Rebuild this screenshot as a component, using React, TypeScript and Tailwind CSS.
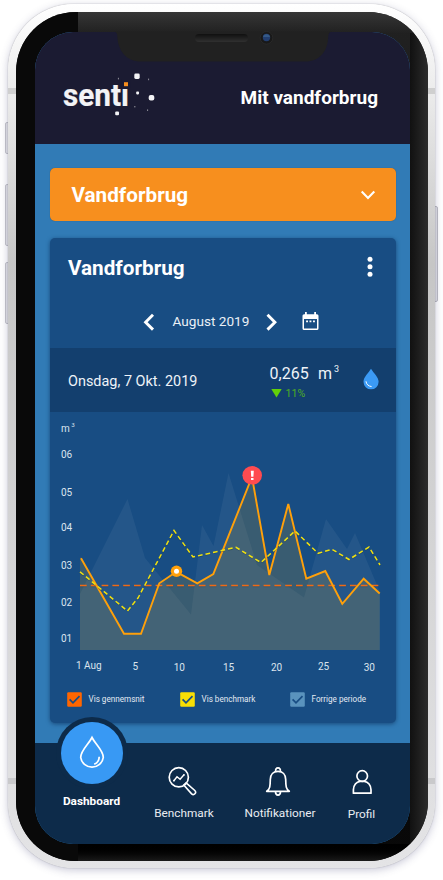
import React from "react";

const PREVIOUS =
  "80,594 127.5,499 145,558 191,614.5 202,525 213.5,546 228.5,473 257,565 304,597.5 326,519 347,549 355,533 377,585 380,593 380,650 80,650";
const CURRENT =
  "81,558.3 124,633.8 141,633.8 159.3,583.3 176.3,571.8 197.3,583.3 213.3,574 252,477 269.3,575 288.3,504 306.3,578.7 325.3,571 342.3,603.8 363.7,578.7 379.7,593.5";
const BENCHMARK =
  "80,571.8 127.5,611 138,598 174,530.5 193,557 236,547.3 261,562.5 295,531 318,553.3 332,549.3 349,559.5 369,547 380,565";

const Y_LABELS: [string, number][] = [
  ["06", 457.7],
  ["05", 495.7],
  ["04", 530.9],
  ["03", 568.7],
  ["02", 605.7],
  ["01", 642.3],
];
const X_LABELS: [string, number, number][] = [
  ["1 Aug", 88.8, 669],
  ["5", 135.2, 670],
  ["10", 179.3, 671.3],
  ["15", 228.5, 671.3],
  ["20", 276.5, 671.3],
  ["25", 323.5, 670],
  ["30", 369.3, 671.3],
];

function Logo() {
  return (
    <svg width="100" height="48" viewBox="62 70 100 48" className="block">
      <text x="63" y="106" fontSize="31.5" fontWeight="700" textLength="66" lengthAdjust="spacingAndGlyphs" fill="#f3f3f5" stroke="#f3f3f5" strokeWidth="0.2" fontFamily="Roboto, sans-serif">
        senti
      </text>
      <rect x="121.2" y="79" width="9" height="9" fill="#1b1b32" />
      <rect x="124" y="82.2" width="4" height="4" fill="#f78f1e" />
      <g fill="#f3f3f5">
        <rect x="134.3" y="73.5" width="5.4" height="5.4" rx="1.4" />
        <rect x="148.7" y="95" width="5.6" height="5.6" rx="2" />
        <rect x="136.2" y="91.6" width="2.8" height="2.8" rx="0.8" />
        <rect x="115.2" y="111.5" width="3.8" height="3.8" rx="1" />
      </g>
      <g fill="#85858f">
        <rect x="117.9" y="77.8" width="1.1" height="1.6" />
        <rect x="148" y="78.6" width="1.1" height="1.6" />
        <rect x="134.2" y="106" width="1.2" height="1.4" />
        <rect x="147" y="109.4" width="1.1" height="1.6" />
      </g>
    </svg>
  );
}

function Chart() {
  return (
    <svg width="346" height="270" viewBox="50 412 346 270" className="block" fontFamily="Roboto, sans-serif">
      <polygon points={PREVIOUS} fill="#fff" fillOpacity="0.055" />
      <polygon points={`80,557 ${CURRENT} 379.7,650 80,650`} fill="#d0a020" fillOpacity="0.18" />
      <g fill="none">
        <path d="M80 586.7H380" stroke="#0b2b4c" strokeOpacity=".2" strokeWidth="1" strokeDasharray="6.7 4.1" />
        <path d="M80 585.5H380" stroke="#f06a14" strokeWidth="1.5" strokeDasharray="6.7 4.1" />
        <polyline points={CURRENT} stroke="#ffa00a" strokeWidth="1.9" />
        <polyline points={BENCHMARK} stroke="#0b2b4c" strokeOpacity=".3" strokeWidth="1.6" strokeDasharray="4.7 3" transform="translate(0 .8)" />
        <polyline points={BENCHMARK} stroke="#f0e010" strokeWidth="1.5" strokeDasharray="4.7 3" />
      </g>
      <circle cx="176.5" cy="571.3" r="5.7" fill="#ffa00a" />
      <circle cx="176.5" cy="571.3" r="2.5" fill="#fff" />
      <ellipse cx="252.2" cy="475.3" rx="9.8" ry="9.3" fill="#ff4b50" />
      <path d="M250.8 470.7h3l-.4 6h-2.2zM251 478h2.5v2.1h-2.5z" fill="#fff" />
      <g fill="#dbe4ee" fontSize="10">
        <text x="61" y="432.3">m</text>
        <text x="71.2" y="427.3" fontSize="6.2">3</text>
        {Y_LABELS.map(([t, y]) => (
          <text key={t} x="61" y={y}>{t}</text>
        ))}
        {X_LABELS.map(([t, x, y]) => (
          <text key={t} x={x} y={y} textAnchor="middle">{t}</text>
        ))}
      </g>
    </svg>
  );
}

function Check({ color, label, className }: { color: string; label: string; className: string }) {
  return (
    <div className={`flex items-center ${className}`}>
      <svg width="15" height="15" viewBox="0 0 15 15" className="shrink-0">
        <rect x="0.2" y="0.2" width="14.6" height="14.6" rx="1.2" fill={color} />
        <path d="M2.6 7.4L6 10.8L12.5 4.2" fill="none" stroke="#184d83" strokeWidth="1.7" />
      </svg>
      <span className="ml-[6.5px] whitespace-nowrap text-[8.15px] text-[#e3eaf2]">{label}</span>
    </div>
  );
}

function MonthPicker() {
  return (
    <div className="flex h-[50px] items-start pl-[93px] pt-[13px]">
      <svg width="12" height="20" viewBox="0 0 12 20" className="mt-[1px]">
        <path d="M10 2.8L2.6 10.2L10 17.6" fill="none" stroke="#fff" strokeWidth="2.9" />
      </svg>
      <span className="ml-[17.5px] w-[78px] whitespace-nowrap text-[13.6px] leading-5 text-[#eaf0f6]">August 2019</span>
      <svg width="12" height="20" viewBox="0 0 12 20" className="ml-[15px] mt-[1px]">
        <path d="M1.5 2.8L8.9 10.2L1.5 17.6" fill="none" stroke="#fff" strokeWidth="2.9" />
      </svg>
      <svg width="18" height="20" viewBox="0 0 18 20" className="ml-[24px]">
        <path d="M2.1 3.2h12.8a1.6 1.6 0 0 1 1.6 1.6V17.4a1.6 1.6 0 0 1-1.6 1.6H2.1A1.6 1.6 0 0 1 .5 17.4V4.8A1.6 1.6 0 0 1 2.1 3.2zM2 8V17.5H15V8z" fill="#fff" fillRule="evenodd" />
        <path d="M3 1h1.8v3H3zM12.2 1H14v3h-1.8zM4.1 9.5h1.9v1.7H4.1zM7.5 9.5h1.9v1.7H7.5zM11 9.5h1.9v1.7H11z" fill="#fff" />
      </svg>
    </div>
  );
}

function UsageCard() {
  return (
    <section className="mt-[17px] h-[485.5px] w-[346px] rounded-[5px] bg-[#184d83] shadow-[0_1px_4px_rgba(10,40,80,0.6)]">
      <div className="flex h-[60px] items-center justify-between pl-[18px] pr-[23.5px]">
        <h2 className="mt-[2px] text-[20.7px] font-bold text-white">Vandforbrug</h2>
        <svg width="6" height="22" viewBox="0 0 6 22" fill="#fff" className="-mt-[2px]">
          <circle cx="3" cy="3.3" r="2.5" />
          <circle cx="3" cy="10.8" r="2.5" />
          <circle cx="3" cy="18.3" r="2.5" />
        </svg>
      </div>
      <MonthPicker />
      <div className="flex h-[64px] bg-[#133f6e] pl-[18px] text-[#eef3f8]">
        <span className="mt-[24px] w-[201.5px] whitespace-nowrap text-[14.45px] leading-5">Onsdag, 7 Okt. 2019</span>
        <div className="w-[93.5px] pt-[16px]">
          <div className="flex h-5 items-start whitespace-nowrap text-[16px] leading-5">
            <span className="w-[48.5px]">0,265</span>
            <span>m</span>
            <span className="-mt-[2px] ml-[2px] text-[9px] leading-[14px]">3</span>
          </div>
          <div className="flex items-center pl-[1.5px] text-[10.6px] leading-5 text-[#4fae26]">
            <svg width="12" height="9" viewBox="0 0 12 9" className="mr-[2.5px]">
              <path d="M.3 0H10.7L5.5 8.5z" fill="#62d008" />
            </svg>
            11%
          </div>
        </div>
        <svg width="16" height="22" viewBox="0 0 16 22" className="mt-[20px]">
          <path d="M8 .8C10.5 5 15.6 9.2 15.6 13.8A7.5 7.5 0 0 1 .5 13.8C.5 9.2 5.5 5 8 .8z" fill="#3b9af5" />
          <path d="M3 13.3C3.3 16.2 5.3 18.2 8.6 18.6" fill="none" stroke="#fff" strokeWidth="1" />
        </svg>
      </div>
      <Chart />
      <div className="flex pl-[17px] pt-[10px]">
        <Check color="#ff6600" label="Vis gennemsnit" className="w-[113px]" />
        <Check color="#f7df05" label="Vis benchmark" className="w-[110px]" />
        <Check color="#5a93bd" label="Forrige periode" className="w-[90px]" />
      </div>
    </section>
  );
}

function BottomNav() {
  const line = { fill: "none", stroke: "#fff", strokeWidth: 1.7 };
  return (
    <nav className="relative flex h-[101px] bg-[#0d2b4a] text-[11.8px] leading-4 text-[#e9edf2]">
      <div className="relative -mt-[26px] flex w-[113px] flex-col items-center">
        <div className="flex h-[72px] w-[72px] items-center justify-center rounded-full bg-[#0d2b4a]">
          <div className="flex h-[62px] w-[62px] items-center justify-center rounded-full bg-[#3899f4]">
            <svg width="28" height="36" viewBox="0 0 28 36">
              <path d="M14 2.5C17.5 9.6 25.3 15.3 25.3 22.5A11.4 11 0 0 1 2.7 22.5C2.7 15.3 10.5 9.6 14 2.5z" {...line} />
              <path d="M21.2 21.8C21.1 25.6 19.3 28 16.2 29.3" {...line} />
            </svg>
          </div>
        </div>
        <span className="mt-[4px] text-[11.8px] font-bold text-white">Dashboard</span>
      </div>
      <div className="flex w-[72px] flex-col items-center pt-[23px]">
        <svg width="30" height="30" viewBox="168 766 30 30" className="-ml-[2px]">
          <circle cx="178.8" cy="777.3" r="9.6" {...line} />
          <path d="M173.9 780.7L177 776.7L180.1 779.2L184 774.8" {...line} strokeWidth="1.4" />
          <path d="M186.1 782.8L194.8 790.5C197 792.7 194 795.9 191.6 793.9L183.8 785z" {...line} strokeWidth="1.6" />
          <circle cx="173.9" cy="780.7" r=".9" fill="#fff" />
          <circle cx="184" cy="774.8" r=".9" fill="#fff" />
        </svg>
        <span className="mt-[9px]">Benchmark</span>
      </div>
      <div className="flex w-[120px] flex-col items-center pt-[22.5px]">
        <svg width="26" height="30" viewBox="265 765 26 30" className="-ml-[4px]">
          <path d="M266.7 790.3C270 788.3 270.2 785 270.3 778.5C270.3 773.5 273.5 770.3 278 770.3S285.7 773.5 285.7 778.5C285.8 785 286 788.3 289.3 790.3z" {...line} strokeLinejoin="round" />
          <path d="M275.8 770.2A2.4 2.4 0 1 1 280.2 770.2M275.5 790.8C275.5 795.2 280.5 795.2 280.5 790.8" {...line} />
        </svg>
        <span className="mt-[9.5px]">Notifikationer</span>
      </div>
      <div className="flex w-[43px] flex-col items-center pt-[24.5px]">
        <svg width="22" height="28" viewBox="0 0 22 28">
          <circle cx="11.2" cy="8" r="5.3" {...line} />
          <path d="M2.4 25.2V21.7C2.4 17 5.4 13.8 9 13.3H13.4C17 13.8 20 17 20 21.7V25.2z" {...line} strokeLinejoin="round" />
        </svg>
        <span className="mt-[10.5px]">Profil</span>
      </div>
    </nav>
  );
}

function Notch() {
  return (
    <svg width="443" height="62" viewBox="0 0 443 62" className="absolute left-0 top-0">
      <defs>
        <linearGradient id="speaker" x2="0" y2="1">
          <stop offset="0" stopColor="#101010" />
          <stop offset="1" stopColor="#303030" />
        </linearGradient>
      </defs>
      <path d="M113 31.8H114C116.3 31.8 117.2 33.4 117.3 36C117.8 51 126.5 61.5 141 61.5H305C320 61.5 327.7 51 328.2 37C328.4 33.4 329.5 31.8 332 31.8z" fill="#212121" />
      <rect x="195" y="34" width="53" height="8" rx="4" fill="url(#speaker)" />
      <circle cx="266.5" cy="37.8" r="6.3" fill="#191919" stroke="#303030" strokeWidth=".6" />
      <circle cx="266.5" cy="37.5" r="3.7" fill="#223e70" />
      <path d="M263 37a3.6 3.6 0 0 1 7 0z" fill="#355a87" />
    </svg>
  );
}

export default function App() {
  return (
    <div className="relative h-[880px] w-[443px] overflow-hidden bg-white pl-[8px] pt-[4px] font-['Roboto',sans-serif]">
      <i className="absolute left-[5px] top-[122px] h-[32px] w-[4px] rounded-l-[2px] border border-[#c5c5ca] bg-[#e5e5e8]" />
      <i className="absolute left-[5px] top-[184px] h-[62px] w-[4px] rounded-l-[2px] border border-[#c5c5ca] bg-[#e5e5e8]" />
      <i className="absolute left-[5px] top-[262px] h-[62px] w-[4px] rounded-l-[2px] border border-[#c5c5ca] bg-[#e5e5e8]" />
      <i className="absolute left-[434px] top-[206px] h-[96px] w-[4px] rounded-r-[2px] border border-[#bcbcc2] bg-[#e0e0e4]" />
      <div className="relative h-[864px] w-[427px] overflow-hidden rounded-[66px] bg-linear-to-b from-white via-[#c6c6c6] via-30% to-[#e4e4e6] pl-[7.5px] pt-[7.5px] shadow-[0_2px_8px_rgba(70,70,120,0.3),0_0_1px_rgba(0,0,0,0.5)]">
        <i className="absolute left-0 top-[84px] h-[6px] w-[427px] bg-[#cfcfcf]" />
        <i className="absolute left-0 top-[774px] h-[6px] w-[427px] bg-[#c9c9cb]" />
        <div className="relative h-[849px] w-[412px] overflow-hidden rounded-[60px] bg-linear-to-b from-[#212121] via-[#131313] via-50% to-[#080808]">
          <div className="absolute right-0 top-0 h-full w-[18px] bg-linear-to-r from-[#111] to-[#2c2c2c]" />
          <div className="absolute left-[62px] top-0 h-[21px] w-[350px] bg-linear-to-b from-[#363636] to-[#212121]" />
          <div className="absolute bottom-0 left-[62px] h-[17px] w-[350px] bg-linear-to-b from-black to-[#1a1a1a]" />
          <div className="absolute left-0 top-0 h-full w-[62.5px] bg-[#090909]" />
          <main className="relative ml-[19.5px] mt-[20.5px] h-[812px] w-[375px] overflow-hidden rounded-[38px] bg-[#317bb6]">
            <header className="flex h-[112px] items-start justify-between bg-[#1b1b32] pl-[27px] pr-[32px] pt-[38px]">
              <Logo />
              <h1 className="mt-[16px] whitespace-nowrap text-[19px] font-bold leading-6 text-white">Mit vandforbrug</h1>
            </header>
            <div className="h-[599px] px-[15px] pt-[23.5px]">
              <button className="flex h-[53px] w-[346px] items-center justify-between rounded-[5px] bg-[#f78f1e] pl-[21.5px] pr-[20px] text-[20.7px] font-bold text-white shadow-[0_0_1px_rgba(60,60,60,0.7)]">
                <span className="mt-[3px]">Vandforbrug</span>
                <svg width="16" height="12" viewBox="0 0 16 12" className="mt-[1px]">
                  <path d="M1.7 2.6L8 8.9L14.3 2.6" fill="none" stroke="#fff" strokeWidth="2.1" />
                </svg>
              </button>
              <UsageCard />
            </div>
            <BottomNav />
          </main>
        </div>
      </div>
      <Notch />
    </div>
  );
}
